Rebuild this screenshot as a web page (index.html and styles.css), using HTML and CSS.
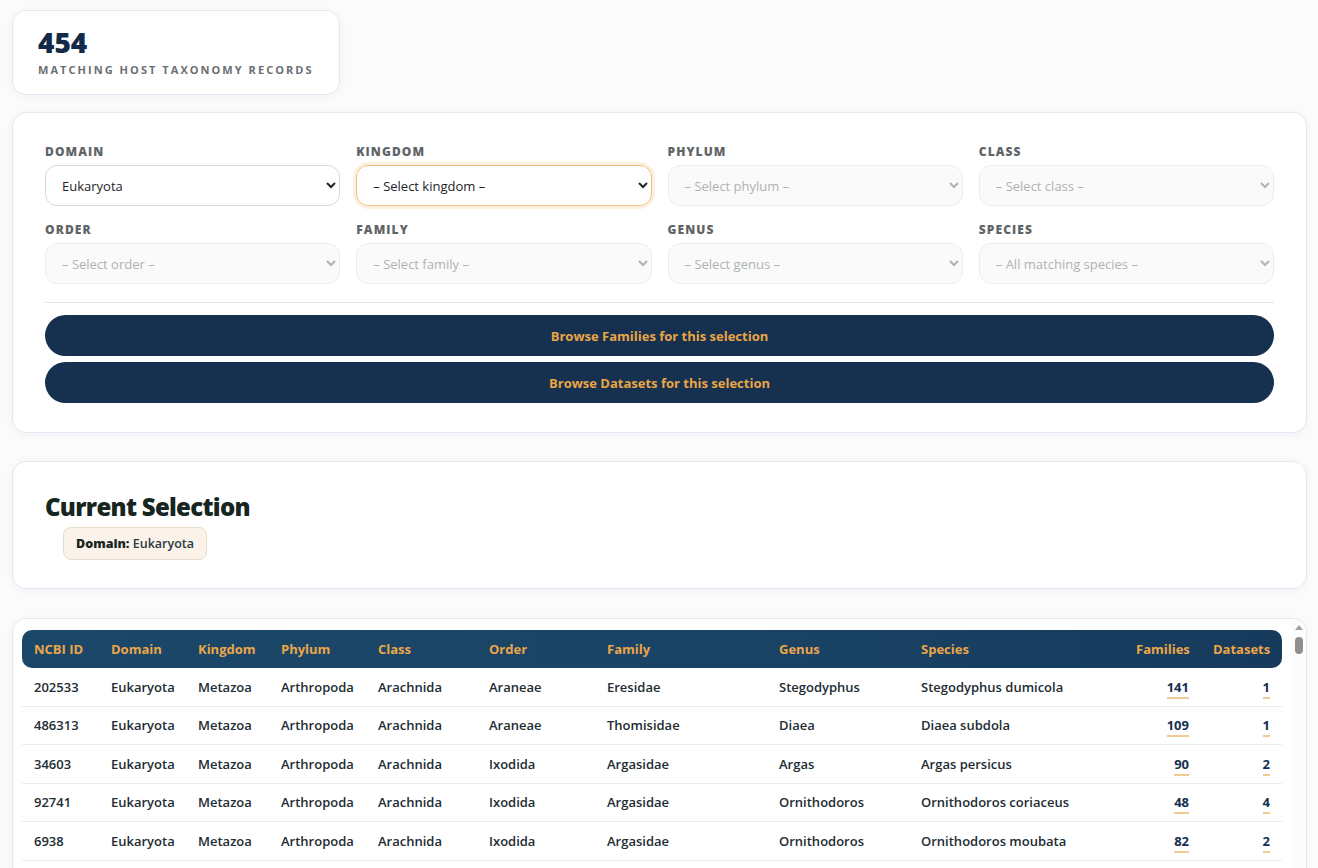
FILE: index.html
```html
<!DOCTYPE html>
<html lang="en">
<head>
<meta charset="utf-8">
<title>Host Taxonomy Browser</title>
<link rel="stylesheet" href="styles.css">
</head>
<body>
<main class="page">
  <section class="card stat-card">
    <div class="stat-value">454</div>
    <div class="stat-label">Matching host taxonomy records</div>
  </section>

  <section class="card filter-card">
    <div class="filter-grid">
      <label class="field">
        <span class="field-label">Domain</span>
        <select class="field-select">
          <option>Eukaryota</option>
        </select>
      </label>
      <label class="field">
        <span class="field-label">Kingdom</span>
        <select class="field-select is-focused">
          <option>– Select kingdom –</option>
        </select>
      </label>
      <label class="field">
        <span class="field-label">Phylum</span>
        <select class="field-select" disabled>
          <option>– Select phylum –</option>
        </select>
      </label>
      <label class="field">
        <span class="field-label">Class</span>
        <select class="field-select" disabled>
          <option>– Select class –</option>
        </select>
      </label>
      <label class="field">
        <span class="field-label">Order</span>
        <select class="field-select" disabled>
          <option>– Select order –</option>
        </select>
      </label>
      <label class="field">
        <span class="field-label">Family</span>
        <select class="field-select" disabled>
          <option>– Select family –</option>
        </select>
      </label>
      <label class="field">
        <span class="field-label">Genus</span>
        <select class="field-select" disabled>
          <option>– Select genus –</option>
        </select>
      </label>
      <label class="field">
        <span class="field-label">Species</span>
        <select class="field-select" disabled>
          <option>– All matching species –</option>
        </select>
      </label>
    </div>
    <div class="filter-actions">
      <button class="pill-button" type="button">Browse Families for this selection</button>
      <button class="pill-button" type="button">Browse Datasets for this selection</button>
    </div>
  </section>

  <section class="card selection-card">
    <h2 class="selection-title">Current Selection</h2>
    <div class="chip-row">
      <span class="chip"><b>Domain:</b> Eukaryota</span>
    </div>
  </section>

  <section class="card table-card">
    <div class="table-scroll">
      <table class="tax-table">
        <colgroup>
          <col class="c-id"><col class="c-domain"><col class="c-kingdom"><col class="c-phylum">
          <col class="c-class"><col class="c-order"><col class="c-family"><col class="c-genus">
          <col class="c-species"><col class="c-families"><col class="c-datasets">
        </colgroup>
        <thead>
          <tr>
            <th>NCBI ID</th><th>Domain</th><th>Kingdom</th><th>Phylum</th><th>Class</th><th>Order</th>
            <th>Family</th><th>Genus</th><th>Species</th><th class="num">Families</th><th class="num">Datasets</th>
          </tr>
        </thead>
        <tbody>
          <tr><td>202533</td><td>Eukaryota</td><td>Metazoa</td><td>Arthropoda</td><td>Arachnida</td><td>Araneae</td><td>Eresidae</td><td>Stegodyphus</td><td>Stegodyphus dumicola</td><td class="num"><a href="#">141</a></td><td class="num"><a href="#">1</a></td></tr>
          <tr><td>486313</td><td>Eukaryota</td><td>Metazoa</td><td>Arthropoda</td><td>Arachnida</td><td>Araneae</td><td>Thomisidae</td><td>Diaea</td><td>Diaea subdola</td><td class="num"><a href="#">109</a></td><td class="num"><a href="#">1</a></td></tr>
          <tr><td>34603</td><td>Eukaryota</td><td>Metazoa</td><td>Arthropoda</td><td>Arachnida</td><td>Ixodida</td><td>Argasidae</td><td>Argas</td><td>Argas persicus</td><td class="num"><a href="#">90</a></td><td class="num"><a href="#">2</a></td></tr>
          <tr><td>92741</td><td>Eukaryota</td><td>Metazoa</td><td>Arthropoda</td><td>Arachnida</td><td>Ixodida</td><td>Argasidae</td><td>Ornithodoros</td><td>Ornithodoros coriaceus</td><td class="num"><a href="#">48</a></td><td class="num"><a href="#">4</a></td></tr>
          <tr><td>6938</td><td>Eukaryota</td><td>Metazoa</td><td>Arthropoda</td><td>Arachnida</td><td>Ixodida</td><td>Argasidae</td><td>Ornithodoros</td><td>Ornithodoros moubata</td><td class="num"><a href="#">82</a></td><td class="num"><a href="#">2</a></td></tr>
          <tr><td>34615</td><td>Eukaryota</td><td>Metazoa</td><td>Arthropoda</td><td>Arachnida</td><td>Ixodida</td><td>Argasidae</td><td>Ornithodoros</td><td>Ornithodoros turicata</td><td class="num"><a href="#">37</a></td><td class="num"><a href="#">1</a></td></tr>
          <tr><td>6945</td><td>Eukaryota</td><td>Metazoa</td><td>Arthropoda</td><td>Arachnida</td><td>Ixodida</td><td>Ixodidae</td><td>Ixodes</td><td>Ixodes scapularis</td><td class="num"><a href="#">156</a></td><td class="num"><a href="#">6</a></td></tr>
          <tr><td>34613</td><td>Eukaryota</td><td>Metazoa</td><td>Arthropoda</td><td>Arachnida</td><td>Ixodida</td><td>Ixodidae</td><td>Ixodes</td><td>Ixodes ricinus</td><td class="num"><a href="#">128</a></td><td class="num"><a href="#">5</a></td></tr>
          <tr><td>6943</td><td>Eukaryota</td><td>Metazoa</td><td>Arthropoda</td><td>Arachnida</td><td>Ixodida</td><td>Ixodidae</td><td>Amblyomma</td><td>Amblyomma americanum</td><td class="num"><a href="#">97</a></td><td class="num"><a href="#">3</a></td></tr>
          <tr><td>34632</td><td>Eukaryota</td><td>Metazoa</td><td>Arthropoda</td><td>Arachnida</td><td>Ixodida</td><td>Ixodidae</td><td>Rhipicephalus</td><td>Rhipicephalus sanguineus</td><td class="num"><a href="#">74</a></td><td class="num"><a href="#">2</a></td></tr>
          <tr><td>6941</td><td>Eukaryota</td><td>Metazoa</td><td>Arthropoda</td><td>Arachnida</td><td>Ixodida</td><td>Ixodidae</td><td>Rhipicephalus</td><td>Rhipicephalus microplus</td><td class="num"><a href="#">88</a></td><td class="num"><a href="#">3</a></td></tr>
          <tr><td>34620</td><td>Eukaryota</td><td>Metazoa</td><td>Arthropoda</td><td>Arachnida</td><td>Ixodida</td><td>Ixodidae</td><td>Dermacentor</td><td>Dermacentor andersoni</td><td class="num"><a href="#">61</a></td><td class="num"><a href="#">2</a></td></tr>
          <tr><td>6954</td><td>Eukaryota</td><td>Metazoa</td><td>Arthropoda</td><td>Arachnida</td><td>Mesostigmata</td><td>Varroidae</td><td>Varroa</td><td>Varroa destructor</td><td class="num"><a href="#">52</a></td><td class="num"><a href="#">2</a></td></tr>
          <tr><td>6956</td><td>Eukaryota</td><td>Metazoa</td><td>Arthropoda</td><td>Arachnida</td><td>Sarcoptiformes</td><td>Pyroglyphidae</td><td>Dermatophagoides</td><td>Dermatophagoides farinae</td><td class="num"><a href="#">44</a></td><td class="num"><a href="#">1</a></td></tr>
          <tr><td>7460</td><td>Eukaryota</td><td>Metazoa</td><td>Arthropoda</td><td>Insecta</td><td>Hymenoptera</td><td>Apidae</td><td>Apis</td><td>Apis mellifera</td><td class="num"><a href="#">212</a></td><td class="num"><a href="#">9</a></td></tr>
          <tr><td>30195</td><td>Eukaryota</td><td>Metazoa</td><td>Arthropoda</td><td>Insecta</td><td>Hymenoptera</td><td>Apidae</td><td>Bombus</td><td>Bombus terrestris</td><td class="num"><a href="#">119</a></td><td class="num"><a href="#">4</a></td></tr>
          <tr><td>7227</td><td>Eukaryota</td><td>Metazoa</td><td>Arthropoda</td><td>Insecta</td><td>Diptera</td><td>Drosophilidae</td><td>Drosophila</td><td>Drosophila melanogaster</td><td class="num"><a href="#">187</a></td><td class="num"><a href="#">7</a></td></tr>
          <tr><td>7165</td><td>Eukaryota</td><td>Metazoa</td><td>Arthropoda</td><td>Insecta</td><td>Diptera</td><td>Culicidae</td><td>Anopheles</td><td>Anopheles gambiae</td><td class="num"><a href="#">143</a></td><td class="num"><a href="#">5</a></td></tr>
          <tr><td>7159</td><td>Eukaryota</td><td>Metazoa</td><td>Arthropoda</td><td>Insecta</td><td>Diptera</td><td>Culicidae</td><td>Aedes</td><td>Aedes aegypti</td><td class="num"><a href="#">166</a></td><td class="num"><a href="#">6</a></td></tr>
        </tbody>
      </table>
    </div>
    <div class="scroll-rail" aria-hidden="true">
      <span class="rail-arrow"></span>
      <span class="rail-thumb"></span>
    </div>
  </section>
</main>
</body>
</html>
```

FILE: styles.css
```css
* {
  box-sizing: border-box;
}

html,
body {
  height: 100%;
  overflow: hidden;
}

body {
  margin: 0;
  background: #fbfbfc;
  color: #1f2b35;
  font-family: "Open Sans", "Liberation Sans", sans-serif;
}

.page {
  padding: 10px 11px 0 12px;
}

/* shared card shell */
.card {
  background: #ffffff;
  border: 1px solid #e2e8f1;
  border-radius: 14px;
  box-shadow: 0 2px 10px rgba(20, 40, 70, 0.04);
}

/* record counter */
.stat-card {
  width: 328px;
  height: 85px;
  padding: 15px 25px 0;
}

.stat-value {
  font-size: 28px;
  font-weight: 800;
  line-height: 32px;
  color: #132a48;
}

.stat-label {
  margin-top: 4px;
  font-size: 11px;
  font-weight: 700;
  letter-spacing: 2.05px;
  text-transform: uppercase;
  color: #6a6f73;
}

/* filter panel */
.filter-card {
  margin-top: 17px;
  padding: 31px 32px 29px;
}

.filter-grid {
  display: grid;
  grid-template-columns: repeat(4, 1fr);
  column-gap: 16px;
  row-gap: 16px;
}

.field {
  display: flex;
  flex-direction: column;
  gap: 5px;
}

.field-label {
  font-size: 12px;
  font-weight: 800;
  letter-spacing: 1.1px;
  line-height: 16px;
  text-transform: uppercase;
  color: #5f6467;
}

.field-select {
  height: 41px;
  width: 100%;
  padding: 0 6px 0 12px;
  border: 1px solid #d6d8da;
  border-radius: 12px;
  background: #ffffff;
  font-family: "Open Sans", "Liberation Sans", sans-serif;
  font-size: 13px;
  color: #1d2328;
}

.field-select.is-focused {
  border-color: #efc17f;
  box-shadow: 0 0 0 3px rgba(240, 190, 120, 0.22);
  outline: none;
}

.field-select:disabled {
  background: #f8f8f8;
  border-color: #e6e6e6;
  color: #8e9296;
}

.filter-actions {
  margin-top: 18px;
  padding-top: 12px;
  border-top: 1px solid #e4e6e8;
  display: flex;
  flex-direction: column;
  gap: 6px;
}

.pill-button {
  height: 41px;
  width: 100%;
  border: 0;
  border-radius: 999px;
  background: #15314f;
  color: #eaa545;
  font-family: "Open Sans", "Liberation Sans", sans-serif;
  font-size: 13px;
  font-weight: 700;
  cursor: pointer;
}

/* current selection */
.selection-card {
  margin-top: 28px;
  padding: 30px 32px 28px;
}

.selection-title {
  margin: 0;
  font-size: 24px;
  font-weight: 800;
  letter-spacing: -0.7px;
  line-height: 30px;
  color: #17251f;
}

.chip-row {
  margin-top: 5px;
  padding-left: 18px;
}

.chip {
  display: inline-block;
  padding: 7px 12px;
  border: 1px solid #e8dcc8;
  border-radius: 8px;
  background: #fbf3e9;
  font-size: 12.5px;
  font-weight: 600;
  line-height: 17px;
  color: #2c3a42;
}

.chip b {
  font-weight: 800;
  color: #17251f;
}

/* results table */
.table-card {
  position: relative;
  margin-top: 29px;
  max-height: 70vh;
  overflow: hidden;
  display: flex;
}

.table-scroll {
  flex: 1;
  overflow-y: auto;
  padding: 11px 24px 10px 9px;
  scrollbar-width: none;
}

.table-scroll::-webkit-scrollbar {
  display: none;
}

/* slim rail drawn at the card's right edge, in place of the hidden native bar */
.scroll-rail {
  position: absolute;
  top: 0;
  right: 0;
  bottom: 0;
  width: 14px;
  display: flex;
  flex-direction: column;
  align-items: center;
  padding-top: 6px;
  background: #fcfcfc;
}

.rail-arrow {
  width: 0;
  height: 0;
  border-left: 4px solid transparent;
  border-right: 4px solid transparent;
  border-bottom: 5px solid #a2a2a2;
}

.rail-thumb {
  margin-top: 7px;
  width: 8px;
  height: 17px;
  border-radius: 4px;
  background: #8f8f8f;
}

.tax-table {
  width: 1260px;
  table-layout: fixed;
  border-collapse: separate;
  border-spacing: 0;
  font-size: 13px;
}

.c-id { width: 77px; }
.c-domain { width: 87px; }
.c-kingdom { width: 83px; }
.c-phylum { width: 97px; }
.c-class { width: 111px; }
.c-order { width: 118px; }
.c-family { width: 172px; }
.c-genus { width: 142px; }
.c-species { width: 215px; }
.c-families { width: 77px; }
.c-datasets { width: 81px; }

/* header gradient is pinned to the viewport so it runs unbroken across cells */
.tax-table thead th {
  height: 38px;
  padding: 0 12px;
  text-align: left;
  font-weight: 750;
  color: #eba649;
  background: linear-gradient(90deg, #1b4769 0%, #1a4466 50%, #163a5b 100%) fixed;
  white-space: nowrap;
}

.tax-table thead th:first-child {
  border-radius: 10px 0 0 10px;
}

.tax-table thead th:last-child {
  border-radius: 0 10px 10px 0;
}

.tax-table td {
  height: 38.5px;
  padding: 0 12px;
  border-bottom: 1px solid #e9edf1;
  font-weight: 600;
  color: #222c33;
  white-space: nowrap;
  overflow: hidden;
}

.tax-table .num {
  text-align: right;
}

.tax-table td a {
  color: #15304e;
  font-weight: 700;
  text-decoration: none;
  border-bottom: 2px solid #f0cb93;
  padding-bottom: 1px;
}
```
